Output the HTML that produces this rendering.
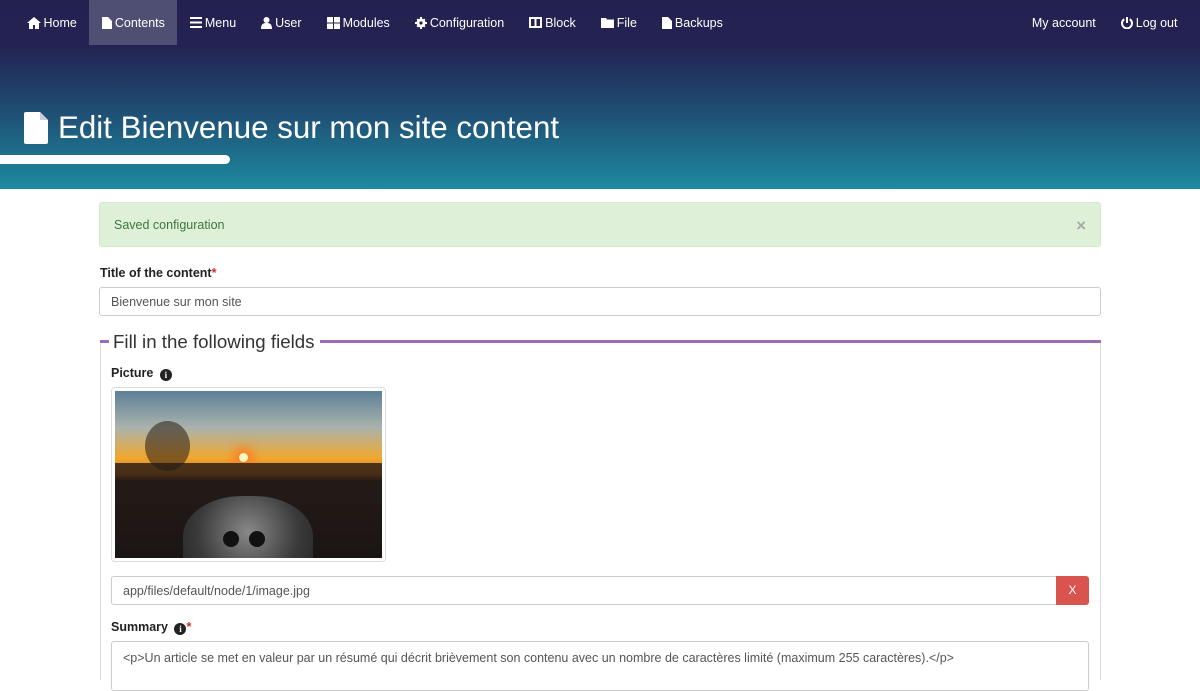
<!DOCTYPE html>
<html><head><meta charset="utf-8"><style>
*{box-sizing:border-box;margin:0;padding:0}
body{width:1200px;height:675px;overflow:hidden;font-family:"Liberation Sans",sans-serif;font-size:13px;color:#333;background:#fff;position:relative}
#hdr{position:absolute;left:0;top:0;width:1200px;height:189px;background:linear-gradient(#232150 0px,#232252 45px,#1f4d72 110px,#1e8aa0 189px)}
.nav{position:absolute;top:0;height:45px;display:flex;align-items:center;color:#fff;font-size:12.5px}
.nav a{display:flex;align-items:center;height:45px;padding:0 12.5px;color:#fff;text-decoration:none}
.nav a.act{background:#4f4f74}
.nav svg{margin-right:3px;fill:#fff}
h1{position:absolute;left:24px;top:110px;color:#fff;font-weight:normal;font-size:31.3px;display:flex;align-items:center}
.bar{position:absolute;left:0;top:155px;width:230px;height:9px;background:#fff;border-radius:0 5px 5px 0}
.alert{position:absolute;left:99px;top:202px;width:1002px;height:45px;background:#dff0d8;border:1px solid #d0e9c6;border-radius:3px;color:#3c763d;padding:15px 14px;font-size:12.5px}
.alert .x{position:absolute;right:14px;top:13px;color:#aaa;font-size:17px;font-weight:bold}
label{position:absolute;font-weight:bold;font-size:12.5px;color:#222}
.req{color:#c9302c}
.inp{position:absolute;border:1px solid #ccc;border-radius:3px;background:#fff;font-size:12.5px;color:#555;padding:0 11px;display:flex;align-items:center}
.fs{position:absolute;left:100px;top:340px;width:1001px;height:340px;border-left:1px solid #ddd;border-right:1px solid #ddd}
.line{position:absolute;top:340px;height:3px;background:#9a6cb4}
.leg{position:absolute;left:113px;top:331px;font-size:18.7px;color:#333}
.info{display:inline-block;width:12px;height:12px;border-radius:50%;background:#222;color:#fff;font-size:9px;text-align:center;line-height:12px;font-family:"Liberation Serif",serif;font-weight:bold;vertical-align:-1px;margin-left:3px}
.thumb{position:absolute;left:111px;top:387px;width:275px;height:175px;border:1px solid #ddd;border-radius:4px;padding:3px}
.img{width:267px;height:167px;position:relative;overflow:hidden;background:linear-gradient(#5d7f98 0%,#aab3ad 22%,#f0a830 40%,#e07a18 50%,#251a17 54%,#1a1513 100%)}
</style></head><body>
<div id="hdr"></div>
<div class="nav" style="left:14px">
<a><svg width="14" height="12" viewBox="0 0 14 12"><path d="M7 0L0 6h2v6h4V8h2v4h4V6h2z"/></svg>Home</a>
<a class="act"><svg width="10" height="12" viewBox="0 0 10 12"><path d="M0 0h6l4 4v8H0z"/></svg>Contents</a>
<a><svg width="12" height="11" viewBox="0 0 12 11"><path d="M0 0h12v2H0zM0 4.5h12v2H0zM0 9h12v2H0z"/></svg>Menu</a>
<a><svg width="11" height="12" viewBox="0 0 11 12"><circle cx="5.5" cy="3" r="3"/><path d="M0 12c0-5 2-6 5.5-6S11 7 11 12z"/></svg>User</a>
<a><svg width="13" height="12" viewBox="0 0 13 12"><path d="M0 0h6v5.5H0zM7 0h6v5.5H7zM0 6.5h6V12H0zM7 6.5h6V12H7z"/></svg>Modules</a>
<a><svg width="12" height="12" viewBox="0 0 12 12"><circle cx="6" cy="6" r="4.5"/><path d="M5 0h2v12H5zM0 5h12v2H0zM1.5 2.9l1.4-1.4 7.6 7.6-1.4 1.4zM9.1 1.5l1.4 1.4-7.6 7.6-1.4-1.4z"/><circle cx="6" cy="6" r="1.6" fill="#232150"/></svg>Configuration</a>
<a><svg width="13" height="11" viewBox="0 0 13 11"><path d="M0 0h13v11H0zM2 2v7h3.5V2zM7.5 2v7H11V2z" fill-rule="evenodd"/></svg>Block</a>
<a><svg width="13" height="11" viewBox="0 0 13 11"><path d="M0 1h5l1 1.5h7V11H0z"/></svg>File</a>
<a><svg width="10" height="12" viewBox="0 0 10 12"><path d="M0 0h6l4 4v8H0z"/></svg>Backups</a>
</div>
<div class="nav" style="right:10px">
<a>My account</a>
<a><svg width="12" height="12" viewBox="0 0 12 12"><path d="M5 0h2v6H5z"/><path d="M3.2 2.2A5 5 0 1 0 8.8 2.2" fill="none" stroke="#fff" stroke-width="2"/></svg>Log out</a>
</div>
<h1><svg width="24" height="32" viewBox="0 0 24 32" style="margin-right:10px"><path d="M2 0h14l8 8v22a2 2 0 0 1-2 2H2a2 2 0 0 1-2-2V2a2 2 0 0 1 2-2z" fill="#fff"/><path d="M16 0v8h8" fill="#ccd"/></svg>Edit Bienvenue sur mon site content</h1>
<div class="bar"></div>
<div class="alert">Saved configuration<span class="x">×</span></div>
<label style="left:100px;top:266px">Title of the content<span class="req">*</span></label>
<div class="inp" style="left:99px;top:287px;width:1002px;height:29px">Bienvenue sur mon site</div>
<div class="fs"></div>
<div class="line" style="left:100px;width:9px"></div>
<div class="line" style="left:320px;width:781px"></div>
<div class="leg">Fill in the following fields</div>
<label style="left:111px;top:366px">Picture <span class="info">i</span></label>
<div class="thumb"><div class="img">
<div style="position:absolute;left:124px;top:62px;width:9px;height:9px;border-radius:50%;background:#fff6c0;box-shadow:0 0 10px 5px #ff7a20"></div>
<div style="position:absolute;left:30px;top:30px;width:45px;height:50px;border-radius:50%;background:#2a1a10;opacity:.55"></div>
<div style="position:absolute;left:0;top:72px;width:267px;height:40px;background:#221a17;opacity:.8"></div>
<div style="position:absolute;left:68px;top:105px;width:130px;height:90px;border-radius:45% 45% 0 0;background:radial-gradient(circle at 50% 40%,#888,#3a3a3a 60%,#222)"></div>
<div style="position:absolute;left:108px;top:140px;width:16px;height:16px;border-radius:50%;background:#111"></div>
<div style="position:absolute;left:134px;top:140px;width:16px;height:16px;border-radius:50%;background:#111"></div>
</div></div>
<div class="inp" style="left:111px;top:576px;width:946px;height:29px;border-radius:3px 0 0 3px">app/files/default/node/1/image.jpg</div>
<div style="position:absolute;left:1056px;top:576px;width:33px;height:29px;background:#d9534f;color:#fff;border-radius:0 3px 3px 0;text-align:center;line-height:29px;font-size:12px">X</div>
<label style="left:111px;top:620px">Summary <span class="info">i</span><span class="req">*</span></label>
<div class="inp" style="left:111px;top:641px;width:978px;height:50px;align-items:flex-start;padding-top:9px">&lt;p&gt;Un article se met en valeur par un résumé qui décrit brièvement son contenu avec un nombre de caractères limité (maximum 255 caractères).&lt;/p&gt;</div>
</body></html>
